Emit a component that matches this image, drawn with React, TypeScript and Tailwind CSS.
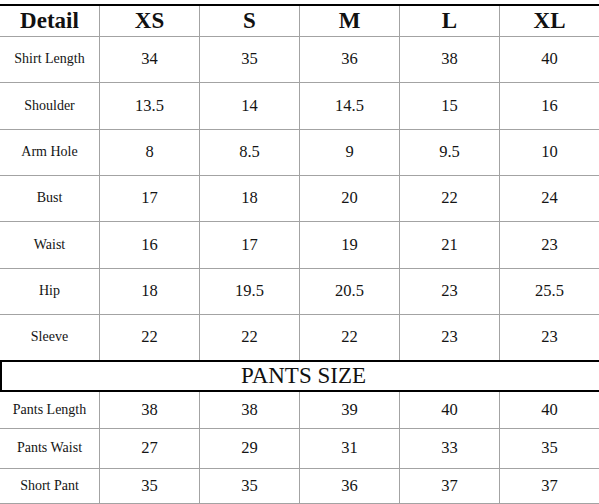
import React from "react";

const sizes = ["XS", "S", "M", "L", "XL"];

const top: { label: string; vals: string[]; h: string; border: boolean }[] = [
  { label: "Shirt Length", vals: ["34", "35", "36", "38", "40"], h: "h-[46px]", border: true },
  { label: "Shoulder", vals: ["13.5", "14", "14.5", "15", "16"], h: "h-[47px]", border: true },
  { label: "Arm Hole", vals: ["8", "8.5", "9", "9.5", "10"], h: "h-[46px]", border: true },
  { label: "Bust", vals: ["17", "18", "20", "22", "24"], h: "h-[46px]", border: true },
  { label: "Waist", vals: ["16", "17", "19", "21", "23"], h: "h-[47px]", border: true },
  { label: "Hip", vals: ["18", "19.5", "20.5", "23", "25.5"], h: "h-[46px]", border: true },
  { label: "Sleeve", vals: ["22", "22", "22", "23", "23"], h: "h-[45px]", border: false },
];

const pants: { label: string; vals: string[]; h: string }[] = [
  { label: "Pants Length", vals: ["38", "38", "39", "40", "40"], h: "h-[37px]" },
  { label: "Pants Waist", vals: ["27", "29", "31", "33", "35"], h: "h-[40px]" },
  { label: "Short Pant", vals: ["35", "35", "36", "37", "37"], h: "h-[35px]" },
];

const serif = "font-['Liberation_Serif','Times_New_Roman',serif]";

function Row({ label, vals, h, border }: { label: string; vals: string[]; h: string; border: boolean }) {
  return (
    <div className={`flex ${h} ${border ? "border-b border-[#a3a3a3]" : ""}`}>
      <div className={`w-[100px] border-r border-[#a3a3a3] flex items-center justify-center pb-[2px] text-[14px] text-[#141414] ${serif}`}>
        {label}
      </div>
      {vals.map((v, i) => (
        <div
          key={i}
          className={`${i === 4 ? "w-[99px]" : "w-[100px] border-r border-[#a3a3a3]"} flex items-center justify-center text-[16.5px] text-[#141414] ${serif}`}
        >
          {v}
        </div>
      ))}
    </div>
  );
}

export default function App() {
  return (
    <div className={`w-[599px] h-[504px] bg-white overflow-hidden pt-[4px] ${serif}`}>
      <div className="border-t-2 border-black">
        <div className="flex h-[31px] border-b border-[#a3a3a3]">
          <div className={`w-[100px] border-r border-[#a3a3a3] flex items-center justify-center text-[23px] font-bold text-[#111] ${serif}`}>
            Detail
          </div>
          {sizes.map((s, i) => (
            <div
              key={s}
              className={`${i === 4 ? "w-[99px]" : "w-[100px] border-r border-[#a3a3a3]"} flex items-center justify-center text-[23px] font-bold text-[#111] ${serif}`}
            >
              {s}
            </div>
          ))}
        </div>
        {top.map((r) => (
          <Row key={r.label} {...r} />
        ))}
        <div className={`h-[32px] border-y-2 border-l-2 border-black flex items-center justify-center pl-[6px] text-[23px] text-[#111] ${serif}`}>
          PANTS SIZE
        </div>
        {pants.map((r) => (
          <Row key={r.label} {...r} border={true} />
        ))}
      </div>
    </div>
  );
}
